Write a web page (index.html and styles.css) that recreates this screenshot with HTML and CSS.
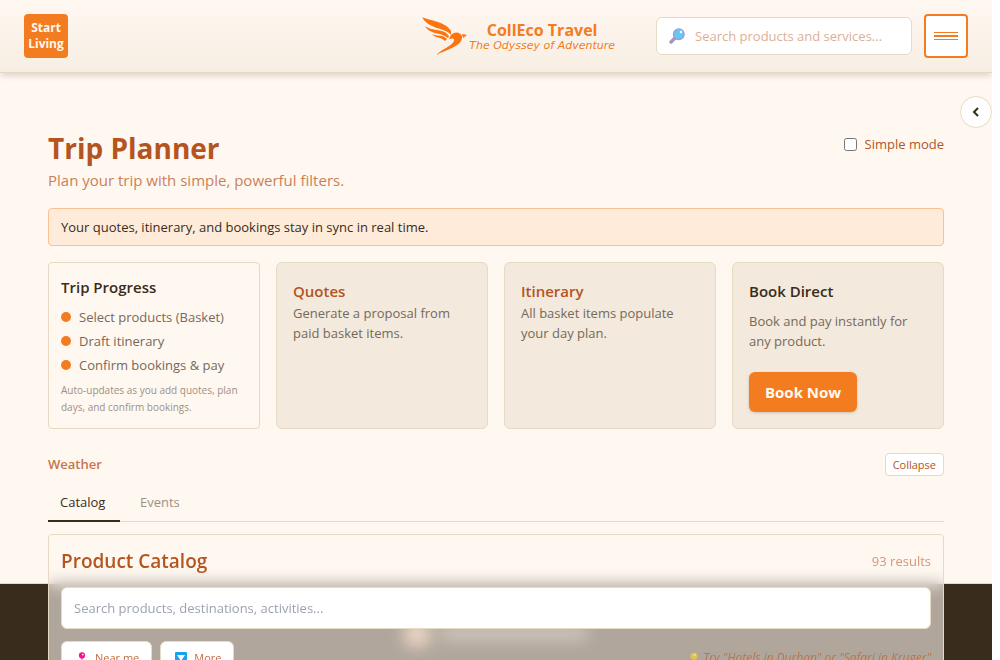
FILE: index.html
```html
<!DOCTYPE html>
<html lang="en">
<head>
<meta charset="utf-8">
<title>Trip Planner – CollEco Travel</title>
<link rel="stylesheet" href="styles.css">
</head>
<body>
<div class="app">
  <header class="topbar">
    <button class="start">Start Living</button>
    <a class="brand" href="#">
      <svg class="brand-mark" viewBox="0 0 46 40" aria-hidden="true">
        <path d="M1 1C9 5 24 5 30 15L30 19C24 11 8 14 1 1Z"/>
        <path d="M4 10C12 16 23 12 28 20L27 22C20 16 9 19 4 10Z"/>
        <path d="M11 18C16 21 22 18 26 23L24 25C19 20 15 23 11 18Z"/>
        <path d="M30 19C34 15 39 16 41 20C42 30 27 33 15 39C21 33 31 30 33 25C34 22 31 22 28 23Z"/>
        <path d="M41 18L46 19L42 22Z"/>
      </svg>
      <span class="brand-text">
        <span class="brand-name">CollEco Travel</span>
        <span class="brand-tag">The Odyssey of Adventure</span>
      </span>
    </a>
    <label class="search">
      <svg class="lens" viewBox="0 0 16 16" aria-hidden="true">
        <path d="M2 14L6 10" stroke="#9e97c4" stroke-width="3.4" stroke-linecap="round"/>
        <circle cx="9.8" cy="6.2" r="5.3" fill="#62c9f5" stroke="#a69bcb" stroke-width="1.4"/>
        <circle cx="12" cy="4" r="1.2" fill="#fff"/>
      </svg>
      <input type="search" placeholder="Search products and services..." aria-label="Search products and services">
    </label>
    <button class="burger" aria-label="Menu">
      <svg viewBox="0 0 24 8" aria-hidden="true"><path d="M0 0H24V1H0ZM0 3H24V5H0ZM0 7H24V8H0Z"/></svg>
    </button>
  </header>
  <button class="drawer" aria-label="Open panel">
    <svg viewBox="0 0 8 12" aria-hidden="true"><path d="M6 2L2 6L6 10"/></svg>
  </button>

  <main class="main">
    <div class="heading">
      <div>
        <h1>Trip Planner</h1>
        <p class="lead">Plan your trip with simple, powerful filters.</p>
      </div>
      <label class="simple"><input type="checkbox"> Simple mode</label>
    </div>

    <p class="notice">Your quotes, itinerary, and bookings stay in sync in real time.</p>

    <section class="cards">
      <article class="card progress">
        <h2>Trip Progress</h2>
        <ul>
          <li>Select products (Basket)</li>
          <li>Draft itinerary</li>
          <li>Confirm bookings &amp; pay</li>
        </ul>
        <p class="note">Auto-updates as you add quotes, plan days, and confirm bookings.</p>
      </article>
      <article class="card filled">
        <h2><a href="#">Quotes</a></h2>
        <p>Generate a proposal from paid basket items.</p>
      </article>
      <article class="card filled">
        <h2><a href="#">Itinerary</a></h2>
        <p>All basket items populate your day plan.</p>
      </article>
      <article class="card filled book">
        <h2>Book Direct</h2>
        <p>Book and pay instantly for any product.</p>
        <button class="book-now">Book Now</button>
      </article>
    </section>

    <div class="weather">
      <h3>Weather</h3>
      <button class="collapse">Collapse</button>
    </div>

    <nav class="tabs">
      <button class="tab active">Catalog</button>
      <button class="tab">Events</button>
    </nav>

    <section class="catalog">
      <div class="catalog-head">
        <h2>Product Catalog</h2>
        <span>93 results</span>
      </div>
      <input class="catalog-search" type="search" placeholder="Search products, destinations, activities..." aria-label="Search catalog">
      <div class="filters">
        <button class="chip">
          <svg viewBox="0 0 12 14" aria-hidden="true"><path d="M5 6H7L6 14Z" fill="#8b8fa0"/><circle cx="6" cy="4" r="3.6" fill="#f5128f"/><circle cx="7" cy="3" r="1" fill="#fff"/></svg>
          Near me
        </button>
        <button class="chip">
          <svg viewBox="0 0 12 12" aria-hidden="true"><rect width="12" height="12" rx="1" fill="#12a4f0"/><path d="M2 3H10L6 9Z" fill="#fff"/></svg>
          More
        </button>
        <span class="hint">
          <svg viewBox="0 0 12 14" aria-hidden="true"><circle cx="7" cy="5" r="4.2" fill="#e2c251"/><circle cx="8" cy="3.5" r="1.2" fill="#f3e6a0"/><path d="M4 8L7 10L4 13L2 11Z" fill="#a5a09a"/></svg>
          Try "Hotels in Durban" or "Safari in Kruger"
        </span>
      </div>
    </section>
  </main>

  <footer class="footer" aria-hidden="true">
    <span class="footer-mark"></span><span class="footer-line"></span>
  </footer>
</div>
</body>
</html>
```
FILE: styles.css
```css
* { box-sizing: border-box; }
body, h1, h2, h3, p, ul { margin: 0; padding: 0; }
body {
  background: #fff;
  color: #3a2c1a;
  font-family: "Open Sans", "Noto Sans", sans-serif;
  font-size: 13px;
  line-height: 20px;
}
button, input { font: inherit; color: inherit; }
button { cursor: pointer; }
a { color: inherit; text-decoration: none; }
svg { display: block; flex: none; }

.app {
  position: relative;
  display: flex;
  flex-direction: column;
  height: 100vh;
  margin-right: 8px;
  overflow: hidden;
  background: #fff8f1;
}

.topbar {
  display: flex;
  align-items: center;
  padding: 14px 24px;
  background: linear-gradient(#fff8f1, #f7eee3);
  border-bottom: 1px solid #e6dac4;
  box-shadow: 0 4px 6px -1px rgba(58, 44, 26, .16);
}
.start {
  width: 44px;
  height: 44px;
  padding: 0;
  border: 0;
  border-radius: 4px;
  background: #f47c20;
  color: #fff8f1;
  font-size: 12px;
  font-weight: 700;
  line-height: 16px;
}
.brand {
  display: flex;
  align-items: center;
  gap: 2px;
  margin-left: auto;
  margin-right: 41px;
  color: #f47c20;
}
.brand-mark { width: 46px; height: 40px; fill: #fb7410; }
.brand-text { display: flex; flex-direction: column; align-items: center; padding-top: 2px; }
.brand-name { font-size: 16px; font-weight: 700; line-height: 18px; }
.brand-tag { font: italic 11px/14px "DejaVu Sans", sans-serif; }
.search {
  display: flex;
  align-items: center;
  gap: 10px;
  width: 256px;
  height: 38px;
  padding: 0 12px;
  border: 1px solid #e6dac4;
  border-radius: 6px;
  background: #fff;
}
.lens { width: 16px; height: 16px; fill: none; }
.search input { flex: 1; min-width: 0; padding: 0; border: 0; outline: 0; background: none; }
.search input::placeholder { color: #dcb098; }
.burger {
  display: grid;
  place-items: center;
  width: 44px;
  height: 44px;
  margin-left: 12px;
  padding: 0;
  border: 2px solid #f47c20;
  border-radius: 4px;
  background: #fff;
}
.burger svg { width: 24px; height: 8px; fill: #f47c20; }
.drawer {
  position: absolute;
  top: 96px;
  right: 0;
  display: grid;
  place-items: center;
  width: 32px;
  height: 32px;
  padding: 0;
  border: 1px solid #e6dac4;
  border-radius: 50%;
  background: #fff;
}
.drawer svg { width: 8px; height: 12px; fill: none; stroke: #3a2c1a; stroke-width: 2; }

.main { flex: 1; min-height: 0; padding: 55px 48px 0; }
.heading { display: flex; justify-content: space-between; }
h1 { color: #b4541f; font-size: 28px; font-weight: 700; line-height: 40px; }
.lead { color: #c9805a; font-size: 15px; line-height: 24px; }
.simple { display: flex; align-items: center; gap: 8px; height: 32px; color: #b4541f; }
.simple input { width: 13px; height: 13px; margin: 0; }
.notice {
  margin-top: 16px;
  padding: 8px 12px;
  border: 1px solid #fac08f;
  border-radius: 4px;
  background: #feebd9;
}

.cards { display: grid; grid-template-columns: repeat(4, 1fr); gap: 16px; margin-top: 16px; }
.card { padding: 12px; border: 1px solid #e6dac4; border-radius: 4px; color: #75695b; }
.card h2 { color: #3a2c1a; font-size: 15px; font-weight: 600; line-height: 24px; }
.card h2 a { color: #b4541f; }
.filled { padding: 16px; border-radius: 6px; background: #f3e9dd; }
.progress ul { display: grid; gap: 4px; margin-top: 8px; list-style: none; }
.progress li { display: flex; align-items: center; gap: 8px; }
.progress li::before { content: ""; width: 10px; height: 10px; border-radius: 50%; background: #f47c20; }
.note { margin-top: 7px; color: #9c9184; font-size: 10px; line-height: 17px; }
.book p { margin-top: 8px; }
.book-now {
  display: block;
  height: 40px;
  margin-top: 21px;
  padding: 0 16px;
  border: 0;
  border-radius: 6px;
  background: #f47c20;
  color: #fff8f1;
  font-size: 15px;
  font-weight: 700;
  box-shadow: 0 1px 3px rgba(58, 44, 26, .2);
}

.weather { display: flex; align-items: flex-start; justify-content: space-between; margin-top: 24px; }
.weather h3 { color: #c9744a; font-size: 13px; font-weight: 600; line-height: 22px; }
.collapse {
  height: 23px;
  padding: 0 7px;
  border: 1px solid #e6dac4;
  border-radius: 4px;
  background: #fff;
  color: #b4541f;
  font-size: 11px;
}
.tabs { display: flex; gap: 8px; margin-top: 8px; border-bottom: 1px solid #e6dac4; }
.tab {
  height: 38px;
  min-width: 72px;
  margin-bottom: -1px;
  padding: 0 12px;
  border: 0;
  border-bottom: 2px solid transparent;
  background: none;
  color: #9c9184;
  text-align: left;
}
.tab.active { border-color: #3a2c1a; color: #3a2c1a; }

.catalog {
  position: relative;
  z-index: 1;
  margin-top: 12px;
  padding: 12px;
  border: 1px solid #e6dac4;
  border-radius: 4px;
  background: rgba(255, 248, 241, .6);
  backdrop-filter: blur(8px);
}
.catalog-head { display: flex; align-items: center; justify-content: space-between; height: 28px; }
.catalog-head h2 { color: #b4541f; font-size: 19px; font-weight: 600; }
.catalog-head span { color: #d49576; }
.catalog-search {
  display: block;
  width: 100%;
  height: 42px;
  margin: 12px 0;
  padding: 0 12px;
  border: 1px solid #e6dac4;
  border-radius: 6px;
  background: #fff;
}
.catalog-search::placeholder { color: #9ca3af; }
.filters { display: flex; align-items: center; gap: 8px; }
.chip {
  display: flex;
  align-items: center;
  gap: 7px;
  height: 34px;
  padding: 0 12px 0 14px;
  border: 1px solid #e6dac4;
  border-radius: 6px;
  background: #fff;
  color: #bf6c42;
  font-size: 11px;
}
.chip svg, .hint svg { width: 12px; height: 12px; }
.hint { display: flex; align-items: center; gap: 4px; margin-left: auto; color: #b77650; font-size: 12px; font-style: italic; }

.footer {
  display: flex;
  align-items: flex-end;
  justify-content: center;
  gap: 12px;
  height: 77px;
  padding-bottom: 14px;
  border-top: 1px solid #e6dac4;
  background: #3a2c1c;
}
.footer-mark { width: 24px; height: 24px; border-radius: 4px; background: #d9a988; }
.footer-line { width: 146px; height: 14px; margin-bottom: 6px; background: #8a8370; }
```
